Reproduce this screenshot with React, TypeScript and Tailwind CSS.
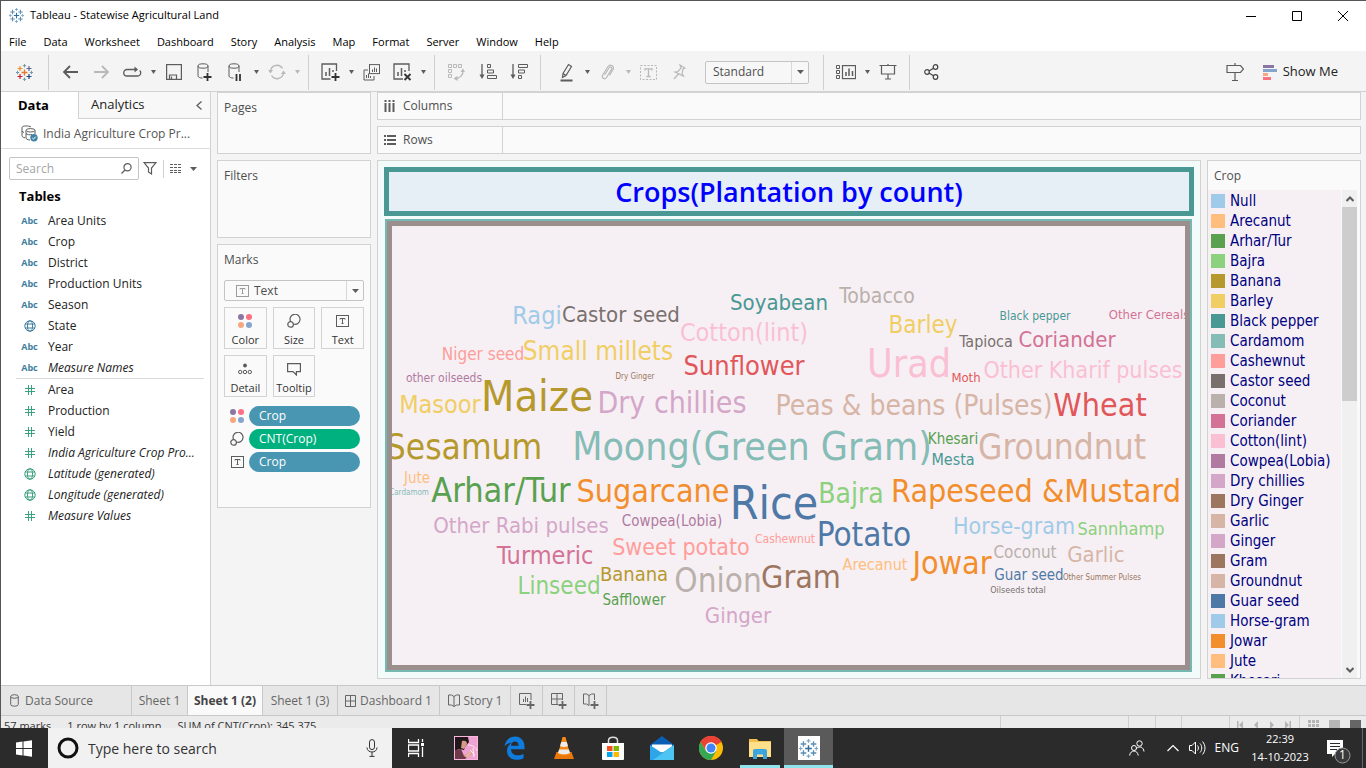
import type { ReactNode } from "react";

/* ---------- data ---------- */

type Word = { text: string; x: number; y: number; size: number; fill: string };

/* x is the middle of the word, y its baseline */
const words: Word[] = [
  { text: "Soyabean", x: 387, y: 84, size: 22, fill: "#499894" },
  { text: "Tobacco", x: 485, y: 77, size: 21, fill: "#bab0ac" },
  { text: "Ragi", x: 145, y: 98, size: 25, fill: "#a0cbe8" },
  { text: "Castor seed", x: 229, y: 96, size: 22, fill: "#79706e" },
  { text: "Cotton(lint)", x: 352, y: 115, size: 25, fill: "#fabfd2" },
  { text: "Barley", x: 531, y: 107, size: 24, fill: "#f1ce63" },
  { text: "Black pepper", x: 643, y: 94, size: 12, fill: "#499894" },
  { text: "Other Cereals", x: 757, y: 93, size: 13, fill: "#d37295" },
  { text: "Tapioca", x: 594, y: 121, size: 16, fill: "#79706e" },
  { text: "Coriander", x: 675, y: 121, size: 22, fill: "#d37295" },
  { text: "Niger seed", x: 91, y: 134, size: 17, fill: "#ff9d9a" },
  { text: "Small millets", x: 206, y: 134, size: 26, fill: "#f1ce63" },
  { text: "Sunflower", x: 352, y: 149, size: 27, fill: "#e15759" },
  { text: "Urad", x: 517, y: 151, size: 39, fill: "#fabfd2" },
  { text: "Moth", x: 574, y: 156, size: 13, fill: "#e15759" },
  { text: "Other Kharif pulses", x: 691, y: 152, size: 23, fill: "#fabfd2" },
  { text: "Dry Ginger", x: 243, y: 153, size: 8, fill: "#9d7660" },
  { text: "other oilseeds", x: 52, y: 156, size: 12, fill: "#b07aa1" },
  { text: "Masoor", x: 48, y: 187, size: 25, fill: "#f1ce63" },
  { text: "Maize", x: 145, y: 185, size: 43, fill: "#b6992d" },
  { text: "Dry chillies", x: 280, y: 187, size: 30, fill: "#d4a6c8" },
  { text: "Peas & beans (Pulses)", x: 522, y: 189, size: 28, fill: "#d7b5a6" },
  { text: "Wheat", x: 708, y: 190, size: 32, fill: "#e15759" },
  { text: "Sesamum", x: 72, y: 233, size: 35, fill: "#b6992d" },
  { text: "Moong(Green Gram)", x: 360, y: 234, size: 39, fill: "#86bcb6" },
  { text: "Khesari", x: 561, y: 218, size: 15, fill: "#59a14f" },
  { text: "Mesta", x: 561, y: 239, size: 16, fill: "#499894" },
  { text: "Groundnut", x: 670, y: 233, size: 35, fill: "#d7b5a6" },
  { text: "Jute", x: 25, y: 257, size: 15, fill: "#ffbe7d" },
  { text: "Cardamom", x: 17, y: 269, size: 8, fill: "#86bcb6" },
  { text: "Arhar/Tur", x: 109, y: 276, size: 34, fill: "#59a14f" },
  { text: "Sugarcane", x: 261, y: 276, size: 32, fill: "#f28e2b" },
  { text: "Rice", x: 382, y: 293, size: 46, fill: "#4e79a7" },
  { text: "Bajra", x: 459, y: 277, size: 28, fill: "#8cd17d" },
  { text: "Rapeseed &Mustard", x: 644, y: 276, size: 32, fill: "#f28e2b" },
  { text: "Other Rabi pulses", x: 129, y: 307, size: 22, fill: "#d4a6c8" },
  { text: "Cowpea(Lobia)", x: 280, y: 300, size: 15, fill: "#b07aa1" },
  { text: "Potato", x: 472, y: 320, size: 33, fill: "#4e79a7" },
  { text: "Horse-gram", x: 622, y: 308, size: 23, fill: "#a0cbe8" },
  { text: "Sannhamp", x: 729, y: 309, size: 18, fill: "#8cd17d" },
  { text: "Turmeric", x: 153, y: 338, size: 25, fill: "#d37295" },
  { text: "Sweet potato", x: 289, y: 329, size: 23, fill: "#ff9d9a" },
  { text: "Cashewnut", x: 393, y: 317, size: 12, fill: "#ff9d9a" },
  { text: "Arecanut", x: 483, y: 344, size: 16, fill: "#ffbe7d" },
  { text: "Jowar", x: 560, y: 348, size: 32, fill: "#f28e2b" },
  { text: "Coconut", x: 633, y: 332, size: 17, fill: "#bab0ac" },
  { text: "Garlic", x: 704, y: 336, size: 22, fill: "#d7b5a6" },
  { text: "Guar seed", x: 637, y: 354, size: 15, fill: "#4e79a7" },
  { text: "Other Summer Pulses", x: 710, y: 354, size: 8, fill: "#9d7660" },
  { text: "Oilseeds total", x: 626, y: 367, size: 9, fill: "#79706e" },
  { text: "Linseed", x: 167, y: 368, size: 24, fill: "#8cd17d" },
  { text: "Banana", x: 242, y: 355, size: 20, fill: "#b6992d" },
  { text: "Onion", x: 326, y: 366, size: 33, fill: "#bab0ac" },
  { text: "Gram", x: 409, y: 362, size: 32, fill: "#9d7660" },
  { text: "Safflower", x: 242, y: 379, size: 15, fill: "#59a14f" },
  { text: "Ginger", x: 346, y: 397, size: 22, fill: "#d4a6c8" },
];

const legend: [string, string][] = [
  ["Null", "#a0cbe8"],
  ["Arecanut", "#ffbe7d"],
  ["Arhar/Tur", "#59a14f"],
  ["Bajra", "#8cd17d"],
  ["Banana", "#b6992d"],
  ["Barley", "#f1ce63"],
  ["Black pepper", "#499894"],
  ["Cardamom", "#86bcb6"],
  ["Cashewnut", "#ff9d9a"],
  ["Castor seed", "#79706e"],
  ["Coconut", "#bab0ac"],
  ["Coriander", "#d37295"],
  ["Cotton(lint)", "#fabfd2"],
  ["Cowpea(Lobia)", "#b07aa1"],
  ["Dry chillies", "#d4a6c8"],
  ["Dry Ginger", "#9d7660"],
  ["Garlic", "#d7b5a6"],
  ["Ginger", "#d4a6c8"],
  ["Gram", "#9d7660"],
  ["Groundnut", "#d7b5a6"],
  ["Guar seed", "#4e79a7"],
  ["Horse-gram", "#a0cbe8"],
  ["Jowar", "#f28e2b"],
  ["Jute", "#ffbe7d"],
  ["Khesari", "#59a14f"],
];

type Field = { name: string; kind: "abc" | "globe" | "hash"; italic?: boolean };

const dimensions: Field[] = [
  { name: "Area Units", kind: "abc" },
  { name: "Crop", kind: "abc" },
  { name: "District", kind: "abc" },
  { name: "Production Units", kind: "abc" },
  { name: "Season", kind: "abc" },
  { name: "State", kind: "globe" },
  { name: "Year", kind: "abc" },
  { name: "Measure Names", kind: "abc", italic: true },
];

const measures: Field[] = [
  { name: "Area", kind: "hash" },
  { name: "Production", kind: "hash" },
  { name: "Yield", kind: "hash" },
  { name: "India Agriculture Crop Pro...", kind: "hash", italic: true },
  { name: "Latitude (generated)", kind: "globe", italic: true },
  { name: "Longitude (generated)", kind: "globe", italic: true },
  { name: "Measure Values", kind: "hash", italic: true },
];

const menus = ["File", "Data", "Worksheet", "Dashboard", "Story", "Analysis", "Map", "Format", "Server", "Window", "Help"];

/* ---------- icons ---------- */

function Svg({ w, h, children, stroke = "#5c5c5c" }: { w: number; h: number; children: ReactNode; stroke?: string }) {
  return (
    <svg width={w} height={h} viewBox={`0 0 ${w} ${h}`} fill="none" stroke={stroke} className="shrink-0" aria-hidden="true">
      {children}
    </svg>
  );
}

function TableauMark({ size, colors }: { size: number; colors: string[] }) {
  const [center, a, b, c, d, small] = colors;
  return (
    <svg width={size} height={size} viewBox="0 0 17 17" fill="none" className="shrink-0" aria-hidden="true">
      <path d="M8.5 5.5v6M5.5 8.5h6" stroke={center} strokeWidth="1.3" />
      <path d="M4 2v5M1.5 4.5h5" stroke={a} strokeWidth="1.2" />
      <path d="M13 2v5M10.500 4.500h5" stroke={b} strokeWidth="1.2" />
      <path d="M4 10v5M1.500 12.500h5" stroke={c} strokeWidth="1.2" />
      <path d="M13 10v5M10.500 12.500h5" stroke={d} strokeWidth="1.2" />
      <path d="M8.500 0v3.400M6.800 1.700h3.400M8.500 13.600v3.400M6.800 15.300h3.400M1.500 6.800v3.400M0 8.500h3.200M15.500 6.800v3.400M13.800 8.500h3.200" stroke={small} />
    </svg>
  );
}

const brandColors = ["#e8762c", "#eb912c", "#5c6692", "#c72035", "#1f457e", "#7199a6"];
const blueColors = ["#2f6f9f", "#5b8fb5", "#5b8fb5", "#5b8fb5", "#5b8fb5", "#7ba7c7"];

function Caret({ faded, big }: { faded?: boolean; big?: boolean }) {
  return (
    <svg width={big ? 7 : 5} height={4} viewBox="0 0 6 4" preserveAspectRatio="none" className="shrink-0" aria-hidden="true">
      <path d="M0 0h6L3 4z" fill={faded ? "#b9b9b9" : "#5c5c5c"} />
    </svg>
  );
}

function AbcIcon() {
  return <span className="text-[9px] font-bold text-[#3e7e9e]">Abc</span>;
}

function GlobeIcon({ color }: { color: string }) {
  return (
    <Svg w={12} h={12} stroke={color}>
      <circle cx="6" cy="6" r="5.2" />
      <ellipse cx="6" cy="6" rx="2.500" ry="5.200" />
      <path d="M1.200 4h9.600M1.200 8h9.600" />
    </Svg>
  );
}

function HashIcon() {
  return (
    <Svg w={10} h={10} stroke="#3aa17e">
      <path d="M3.500 0v10M6.500 0v10M0 3.500h10M0 6.500h10" />
    </Svg>
  );
}

function DotsIcon() {
  return (
    <svg width="14" height="14" viewBox="0 0 14 14" className="shrink-0" aria-hidden="true">
      <circle cx="3" cy="3" r="3" fill="#8b75a1" />
      <circle cx="11" cy="3" r="3" fill="#fc7182" />
      <circle cx="3" cy="11" r="3" fill="#f6a77f" />
      <circle cx="11" cy="11" r="3" fill="#85a5cd" />
    </svg>
  );
}

function SizeIcon() {
  return (
    <Svg w={14} h={14}>
      <path d="M3.600 7.500A5 5 0 1 1 6.500 10" strokeWidth="1.200" />
      <circle cx="3.600" cy="10.400" r="2.800" strokeWidth="1.200" />
    </Svg>
  );
}

function TextIcon({ faded }: { faded?: boolean }) {
  return (
    <Svg w={13} h={12} stroke={faded ? "#9b9b9b" : "#5c5c5c"}>
      <rect x="0.500" y="0.500" width="12" height="11" />
      <path d="M4 4.500V3.500h5v1M6.500 3.500v5M5.500 8.500h2" />
    </Svg>
  );
}

function DetailIcon() {
  return (
    <Svg w={14} h={12}>
      <circle cx="7" cy="2.500" r="1.900" fill="#5c5c5c" stroke="none" />
      <circle cx="2.200" cy="9" r="1.700" />
      <circle cx="7" cy="9" r="1.700" />
      <circle cx="11.800" cy="9" r="1.700" />
    </Svg>
  );
}

function TooltipIcon() {
  return (
    <Svg w={14} h={13}>
      <path d="M0.600 0.600h12.800v8h-4v3.400L6 8.600H0.600z" strokeWidth="1.200" />
    </Svg>
  );
}

const BackIcon = () => (
  <Svg w={17} h={14}><path d="M16 7H2M8 1L2 7l6 6" strokeWidth="1.800" /></Svg>
);
const ForwardIcon = () => (
  <Svg w={17} h={14} stroke="#b9b9b9"><path d="M1 7h14M9 1l6 6-6 6" strokeWidth="1.800" /></Svg>
);
const ReplayIcon = () => (
  <Svg w={19} h={12}>
    <path d="M14 3.500H4a3.200 3.200 0 0 0 0 6.500h10.500a3 3 0 0 0 3.200-3.200c0-1-.4-1.800-1-2.300" strokeWidth="1.300" />
    <path d="M11.500 0.500l3.500 3-3.500 3z" fill="#5c5c5c" stroke="none" />
  </Svg>
);
const SaveIcon = () => (
  <Svg w={16} h={16}>
    <rect x="0.600" y="0.600" width="14.800" height="14.800" strokeWidth="1.200" />
    <path d="M3.500 15v-4h7v4M5.500 15v-2.500" strokeWidth="1.200" />
  </Svg>
);
const NewDataIcon = () => (
  <Svg w={15} h={18}>
    <ellipse cx="6" cy="3" rx="5" ry="2.200" />
    <path d="M1 3v10c0 1.200 2 2 4.500 2.100M11 3v6" />
    <path d="M10.500 10v8M6.500 14h8" stroke="#333" strokeWidth="1.800" />
  </Svg>
);
const PauseDataIcon = () => (
  <Svg w={15} h={18}>
    <ellipse cx="6" cy="3" rx="5" ry="2.200" />
    <path d="M1 3v10c0 1.200 2 2 4.500 2.100M11 3v6" />
    <path d="M8.500 11v7M12 11v7" stroke="#333" strokeWidth="1.800" />
  </Svg>
);
const RefreshIcon = () => (
  <Svg w={18} h={16} stroke="#b9b9b9">
    <path d="M2.500 7A6.500 6.500 0 0 1 14.500 4.500M15.500 9a6.500 6.500 0 0 1-12 2.500" strokeWidth="1.400" />
    <path d="M0 6h5L2.500 9.500zM18 10h-5l2.500-3.500z" fill="#b9b9b9" stroke="none" />
  </Svg>
);
const NewSheetIcon = () => (
  <Svg w={19} h={18}>
    <path d="M15.500 8V1H1v15h8.500" strokeWidth="1.300" />
    <path d="M5 13V9M8.500 13V5M12 9V7" strokeWidth="1.500" />
    <path d="M14.500 10v8M10.500 14h8" stroke="#333" strokeWidth="1.800" />
  </Svg>
);
const DuplicateIcon = () => (
  <Svg w={18} h={17}>
    <rect x="6.500" y="0.600" width="10" height="9" />
    <path d="M9.500 8V5.500M11.500 8V3.500M13.500 8V4.500M5 6H1v10h10v-4M3.500 14v-3M5.500 14v-4.500M7.500 14v-2" />
  </Svg>
);
const ClearIcon = () => (
  <Svg w={20} h={18}>
    <path d="M16 8V1H1v15h9" strokeWidth="1.300" />
    <path d="M5 13V9M8.500 13V5M12 9V7" strokeWidth="1.500" />
    <path d="M11.500 11l6 6M17.500 11l-6 6" stroke="#333" strokeWidth="1.800" />
  </Svg>
);
const SwapIcon = () => (
  <Svg w={17} h={17} stroke="#b9b9b9">
    <path d="M0.500 0.500h3v3h-3zM5.500 0.500h3v3h-3zM10.500 0.500h3v3h-3zM0.500 5.500h3v3h-3zM0.500 10.500h3v3h-3z" />
    <path d="M15 6c.5 5-3 8.500-8 8.500" strokeWidth="1.300" />
    <path d="M12.500 8L15 4.500 17 8zM9.500 12L5.500 14.500 9.500 17z" fill="#b9b9b9" stroke="none" />
  </Svg>
);
const SortAscIcon = () => (
  <Svg w={18} h={16}>
    <path d="M3 0v13" strokeWidth="1.300" />
    <path d="M0.500 10.500h5L3 15z" fill="#5c5c5c" stroke="none" />
    <path d="M8.500 0.500h3v3h-3zM8.500 6h6v3h-6zM8.500 11.500h9v3h-9z" />
  </Svg>
);
const SortDescIcon = () => (
  <Svg w={18} h={16}>
    <path d="M3 0v13" strokeWidth="1.300" />
    <path d="M0.500 10.500h5L3 15z" fill="#5c5c5c" stroke="none" />
    <path d="M8.500 0.500h9v3h-9zM8.500 6h6v3h-6zM8.500 11.500h3v3h-3z" />
  </Svg>
);
const HighlightIcon = () => (
  <Svg w={13} h={19}>
    <path d="M3 10.500L8.500 1.500l3 2-5.500 9-3.500 2zM3 10.500l3 2" strokeWidth="1.200" />
    <path d="M0.500 17.500h12" strokeWidth="2" />
  </Svg>
);
const ClipIcon = () => (
  <Svg w={13} h={16} stroke="#b9b9b9">
    <path d="M3.500 11L8 4c1.200-2 3.600-.6 2.500 1.400L5.500 13.500C4 16 .2 14 1.600 11.300L7 2.500C9 -.5 13.600 2 12 5.500L8.500 11.500" strokeWidth="1.200" />
  </Svg>
);
const LabelIcon = () => (
  <Svg w={17} h={15} stroke="#b9b9b9">
    <rect x="0.500" y="0.500" width="16" height="14" strokeDasharray="2 1.500" />
    <path d="M5 5.500V3.800h7v1.700M8.500 4v7.500M6.500 11.500h4" strokeWidth="1.300" />
  </Svg>
);
const PinIcon = () => (
  <Svg w={13} h={16} stroke="#b9b9b9">
    <path d="M7 1l5 3-2 1-1 4.500 1.500 2.500L2 8l3-.5L8 4zM5.500 10L1 15" strokeWidth="1.200" />
  </Svg>
);
const FitIcon = () => (
  <Svg w={20} h={15}>
    <path d="M0.500 0.500h3v3h-3zM0.500 5.500h3v3h-3zM0.500 10.500h3v3h-3z" />
    <rect x="6.500" y="0.600" width="13" height="13" strokeWidth="1.200" />
    <path d="M10 11V7M13 11V3.500M16.500 11V6" strokeWidth="1.500" />
  </Svg>
);
const PresentIcon = () => (
  <Svg w={18} h={16}>
    <path d="M0.500 1.500h17M2.500 2v8h13V2M9 0v1.500M9 10v5M6 15h6" strokeWidth="1.200" />
  </Svg>
);
const ShareIcon = () => (
  <Svg w={15} h={16} stroke="#444">
    <circle cx="3" cy="8" r="2.300" strokeWidth="1.200" />
    <circle cx="11.500" cy="3" r="2.300" strokeWidth="1.200" />
    <circle cx="11.500" cy="13" r="2.300" strokeWidth="1.200" />
    <path d="M5 7l4.500-2.700M5 9l4.500 2.700" strokeWidth="1.200" />
  </Svg>
);
const SignIcon = () => (
  <Svg w={18} h={18}>
    <path d="M1 2.500h13.500L17.500 6l-3 3.500H1zM9 0v2.500M9 9.500v8M6 17.500h6" strokeWidth="1.200" />
  </Svg>
);
const TabPlus = () => <path d="M11.500 8v8M7.500 12h8" strokeWidth="1.800" />;
const SheetTabIcon = () => (
  <Svg w={16} h={16} stroke="#666">
    <path d="M12 7V0.500H0.500v11H7M4.500 9V6M6.500 9V3.500M8.500 9V5" />
    <TabPlus />
  </Svg>
);
const DashTabIcon = ({ plus }: { plus?: boolean }) => (
  <Svg w={plus ? 16 : 11} h={plus ? 16 : 12} stroke="#666">
    {plus ? (
      <>
        <path d="M11.500 7V0.500H0.500v11H7M6 0.500v11M0.500 6h11" />
        <TabPlus />
      </>
    ) : (
      <path d="M0.500 0.500h10v11h-10zM5.500 0.500v11M0.500 6h10" />
    )}
  </Svg>
);
const StoryTabIcon = ({ plus }: { plus?: boolean }) => (
  <Svg w={plus ? 16 : 12} h={plus ? 16 : 13} stroke="#666">
    {plus ? (
      <>
        <path d="M6 2.500L3.500 1h-3v10h3L6 12.500zM6 2.500L8.500 1h3v6" />
        <TabPlus />
      </>
    ) : (
      <path d="M6 2.500L3.500 1h-3v10h3L6 12.500l2.500-1.500h3V1h-3zM6 2.500v10" />
    )}
  </Svg>
);

/* ---------- pieces ---------- */

function ToolButton({ label, children }: { label: string; children: ReactNode }) {
  return (
    <button aria-label={label} className="flex h-8 w-[31px] shrink-0 items-center justify-center">
      {children}
    </button>
  );
}

function CaretButton({ label, faded }: { label: string; faded?: boolean }) {
  return (
    <button aria-label={label} className="flex h-8 w-[10px] shrink-0 items-center justify-center">
      <Caret faded={faded} />
    </button>
  );
}

const Divider = () => <div className="mx-[6px] h-[35px] w-px shrink-0 bg-[#cfcfcf]" />;

function FieldRow({ field, tone }: { field: Field; tone: string }) {
  return (
    <li>
      <button className="flex h-[21px] w-full items-center">
        <span className="flex w-[47px] items-center justify-center pl-[10px]">
          {field.kind === "abc" ? <AbcIcon /> : field.kind === "hash" ? <HashIcon /> : <GlobeIcon color={tone} />}
        </span>
        <span className={field.italic ? "whitespace-nowrap italic" : "whitespace-nowrap"}>{field.name}</span>
      </button>
    </li>
  );
}

function Card({ title, height, children }: { title: string; height: string; children?: ReactNode }) {
  return (
    <section className={`flex flex-col border border-[#d2d2d2] bg-[#fafafa] px-1.5 ${height}`}>
      <h2 className="pt-[7px] leading-4 text-[#4e4e4e]">{title}</h2>
      {children}
    </section>
  );
}

function MarkButton({ label, children }: { label: string; children: ReactNode }) {
  return (
    <button className="flex h-[42px] flex-col items-center border border-[#d2d2d2] bg-[#fafafa] pt-1.5 text-[#333]">
      <span className="flex h-[14px] items-center">{children}</span>
      <span className="mt-1 leading-4">{label}</span>
    </button>
  );
}

function Pill({ label, tone, children }: { label: string; tone: string; children: ReactNode }) {
  return (
    <li className="flex items-center">
      <span className="flex w-[25px] items-center justify-center pl-px">{children}</span>
      <button className={`h-5 flex-1 rounded-full pl-[10px] text-left font-medium text-white ${tone}`}>{label}</button>
    </li>
  );
}

function Shelf({ label, children }: { label: string; children: ReactNode }) {
  return (
    <section className="flex h-[28px] border border-[#d2d2d2] bg-[#fafafa]">
      <h2 className="flex w-[125px] items-center border-r border-[#d2d2d2] pl-1.5 text-[#4e4e4e]">
        <span className="w-[19px]">{children}</span>
        {label}
      </h2>
    </section>
  );
}

function SheetTab({ children, width, active, label }: { children: ReactNode; width: string; active?: boolean; label?: string }) {
  return (
    <button
      aria-label={label}
      className={`flex items-center justify-center gap-1 border-r border-[#c8c8c8] whitespace-nowrap ${width} ${
        active ? "bg-[#fafafa] font-bold text-[#444]" : "text-[#666]"
      }`}
    >
      {children}
    </button>
  );
}

function TaskButton({ label, children, state = "" }: { label: string; children: ReactNode; state?: string }) {
  return (
    <button aria-label={label} className={`flex w-[49px] shrink-0 items-center justify-center ${state}`}>
      {children}
    </button>
  );
}

/* ---------- regions ---------- */

function TitleBar() {
  return (
    <header className="bg-white text-[11px] text-black">
      <div className="flex h-[29px] items-center pl-2">
        <TableauMark size={15} colors={blueColors} />
        <h1 className="flex-1 pl-1.5">Tableau - Statewise Agricultural Land</h1>
        <button aria-label="Minimize" className="flex h-full w-[46px] items-center justify-center">
          <Svg w={10} h={10} stroke="#000"><path d="M0 5.500h10" /></Svg>
        </button>
        <button aria-label="Maximize" className="flex h-full w-[46px] items-center justify-center">
          <Svg w={10} h={10} stroke="#000"><path d="M0.500 0.500h9v9h-9z" /></Svg>
        </button>
        <button aria-label="Close" className="flex h-full w-[46px] items-center justify-center">
          <Svg w={10} h={10} stroke="#000"><path d="M0 0l10 10M10 0L0 10" /></Svg>
        </button>
      </div>
      <nav className="flex h-[21px] items-center gap-[17px] pt-[3px] pl-2">
        {menus.map((m) => (
          <button key={m}>{m}</button>
        ))}
      </nav>
    </header>
  );
}

function Toolbar() {
  return (
    <div className="flex h-[41px] shrink-0 items-center border-b border-[#d2d2d2] bg-[#f4f4f4] pt-[2px]">
      <button aria-label="Start page" className="flex w-[47px] items-center justify-center">
        <TableauMark size={17} colors={brandColors} />
      </button>
      <div className="mr-1.5 h-[35px] w-px bg-[#cfcfcf]" />
      <ToolButton label="Undo"><BackIcon /></ToolButton>
      <ToolButton label="Redo"><ForwardIcon /></ToolButton>
      <ToolButton label="Replay"><ReplayIcon /></ToolButton>
      <CaretButton label="Replay options" />
      <ToolButton label="Save"><SaveIcon /></ToolButton>
      <ToolButton label="New data source"><NewDataIcon /></ToolButton>
      <ToolButton label="Pause updates"><PauseDataIcon /></ToolButton>
      <CaretButton label="Pause options" />
      <ToolButton label="Run update"><RefreshIcon /></ToolButton>
      <CaretButton label="Run options" faded />
      <Divider />
      <ToolButton label="New worksheet"><NewSheetIcon /></ToolButton>
      <CaretButton label="New worksheet options" />
      <ToolButton label="Duplicate"><DuplicateIcon /></ToolButton>
      <ToolButton label="Clear sheet"><ClearIcon /></ToolButton>
      <CaretButton label="Clear options" />
      <Divider />
      <ToolButton label="Swap rows and columns"><SwapIcon /></ToolButton>
      <ToolButton label="Sort ascending"><SortAscIcon /></ToolButton>
      <ToolButton label="Sort descending"><SortDescIcon /></ToolButton>
      <Divider />
      <div className="w-1 shrink-0" />
      <ToolButton label="Highlight"><HighlightIcon /></ToolButton>
      <CaretButton label="Highlight options" />
      <ToolButton label="Group members"><ClipIcon /></ToolButton>
      <CaretButton label="Group options" faded />
      <ToolButton label="Show mark labels"><LabelIcon /></ToolButton>
      <ToolButton label="Fix axes"><PinIcon /></ToolButton>
      <div className="relative ml-[10px] flex h-[23px] w-[104px] shrink-0 items-center">
        <select
          aria-label="Fit"
          className="h-full w-full appearance-none rounded-[2px] border border-[#c4c4c4] bg-[#f7f7f7] pl-[7px] text-[#4e4e4e]"
        >
          <option>Standard</option>
        </select>
        <span className="pointer-events-none absolute inset-y-px right-px flex w-[17px] items-center justify-center border-l border-[#d8d8d8]">
          <Caret big />
        </span>
      </div>
      <div className="mr-1.5 ml-[14px] h-[35px] w-px bg-[#cfcfcf]" />
      <button aria-label="Show or hide cards" className="flex w-8 items-center justify-center"><FitIcon /></button>
      <CaretButton label="Card options" />
      <ToolButton label="Presentation mode"><PresentIcon /></ToolButton>
      <Divider />
      <ToolButton label="Share"><ShareIcon /></ToolButton>
      <div className="flex-1" />
      <ToolButton label="Guide"><SignIcon /></ToolButton>
      <button className="mr-7 ml-3 flex items-center gap-1.5 text-[13px] text-[#222]">
        <svg width="14" height="15" viewBox="0 0 14 15" aria-hidden="true">
          <path d="M0 0h11v3H0z" fill="#8b75a1" />
          <path d="M0 4h14v3H0z" fill="#85a5cd" />
          <path d="M0 8h5v3H0z" fill="#f6a77f" />
          <path d="M0 12h8v3H0z" fill="#fc7182" />
        </svg>
        Show Me
      </button>
    </div>
  );
}

function DataPane() {
  return (
    <aside className="flex w-[210px] shrink-0 flex-col border-r border-[#d2d2d2] bg-white text-[#222]">
      <div className="flex h-[27px] text-[13px]">
        <button className="w-[77px] pr-3 text-center font-bold text-black">Data</button>
        <button className="flex flex-1 items-center border-b border-l border-[#d2d2d2] bg-[#f8f8f8] pl-3">Analytics</button>
        <button aria-label="Collapse pane" className="flex w-[20px] items-center border-b border-[#d2d2d2] bg-[#f8f8f8] pl-[6px]">
          <Svg w={6} h={9}><path d="M5.500 0.500l-4.500 4 4.500 4" strokeWidth="1.300" /></Svg>
        </button>
      </div>
      <button className="flex h-[30px] shrink-0 items-center border-b border-[#dcdcdc] pl-5 text-[#555]">
        <svg width="17" height="17" viewBox="0 0 17 17" fill="none" stroke="#5c5c5c" className="mr-[5px]" aria-hidden="true">
          <path d="M10 2C8 .5 1 .5 1 2.500v8C1 12 2.500 12.500 4 12.800M1 6c.3.800 1 1.200 2 1.400" />
          <path d="M5 5.500v7.500c0 1 1.500 1.800 4 2M14 5.500V9M5 8.500c1 1.200 4 1.600 6 1" />
          <ellipse cx="9.500" cy="5.300" rx="4.500" ry="1.700" />
          <circle cx="13" cy="12.800" r="3.700" fill="#3e82a8" stroke="none" />
          <path d="M11.300 13l1.200 1.200 2.200-2.600" stroke="#fff" />
        </svg>
        India Agriculture Crop Pr...
      </button>
      <div className="mt-2 flex h-[23px] shrink-0 items-center pl-2">
        <label className="flex h-full w-[130px] items-center rounded-[2px] border border-[#c4c4c4] pr-1.5">
          <input aria-label="Search fields" placeholder="Search" className="min-w-0 flex-1 pl-1.5 placeholder-[#a5a5a5] outline-none" />
          <Svg w={11} h={11}>
            <circle cx="6.500" cy="4.300" r="3.600" strokeWidth="1.200" />
            <path d="M4 7L0.500 10.500" strokeWidth="1.200" />
          </Svg>
        </label>
        <button aria-label="Filter fields" className="ml-1">
          <Svg w={14} h={13}><path d="M1 0.600h12L8.500 6v6l-3-2V6z" strokeWidth="1.200" /></Svg>
        </button>
        <span className="mx-[6px] h-[18px] w-px bg-[#d2d2d2]" />
        <button aria-label="View as list">
          <Svg w={12} h={9}><path d="M0 0.500h12M0 3.500h12M0 6.500h12M0 8.500h12" strokeDasharray="3 1" /></Svg>
        </button>
        <button aria-label="Field options" className="ml-2"><Caret big /></button>
      </div>
      <h2 className="mt-[7px] pl-[18px] text-[13px] leading-[18px] font-bold text-black">Tables</h2>
      <ul className="mt-[5px]">
        {dimensions.map((f) => <FieldRow key={f.name} field={f} tone="#3e7e9e" />)}
      </ul>
      <div className="mr-1.5 ml-[15px] h-px shrink-0 bg-[#dcdcdc]" />
      <ul>
        {measures.map((f) => <FieldRow key={f.name} field={f} tone="#3aa17e" />)}
      </ul>
    </aside>
  );
}

function Cards() {
  return (
    <div className="flex w-[154px] shrink-0 flex-col gap-1.5">
      <Card title="Pages" height="h-[62px]" />
      <Card title="Filters" height="h-[78px]" />
      <Card title="Marks" height="h-[264px]">
        <div className="relative mt-3 flex h-[21px] w-[140px] shrink-0 items-center">
          <select
            aria-label="Mark type"
            className="h-full w-full appearance-none rounded-[2px] border border-[#c4c4c4] bg-[#fafafa] pl-[29px] text-[#4e4e4e]"
          >
            <option>Text</option>
          </select>
          <span className="pointer-events-none absolute left-3"><TextIcon faded /></span>
          <span className="pointer-events-none absolute inset-y-px right-px flex w-[17px] items-center justify-center border-l border-[#d8d8d8]">
            <Caret big />
          </span>
        </div>
        <div className="mt-1.5 grid grid-cols-3 gap-1.5 text-[11px]">
          <MarkButton label="Color"><DotsIcon /></MarkButton>
          <MarkButton label="Size"><SizeIcon /></MarkButton>
          <MarkButton label="Text"><TextIcon /></MarkButton>
          <MarkButton label="Detail"><DetailIcon /></MarkButton>
          <MarkButton label="Tooltip"><TooltipIcon /></MarkButton>
        </div>
        <ul className="mt-[9px] flex flex-col gap-[3px] pr-1">
          <Pill label="Crop" tone="bg-[#4996b2]"><DotsIcon /></Pill>
          <Pill label="CNT(Crop)" tone="bg-[#00b180]"><SizeIcon /></Pill>
          <Pill label="Crop" tone="bg-[#4996b2]"><TextIcon /></Pill>
        </ul>
      </Card>
    </div>
  );
}

function Viz() {
  return (
    <main className="flex min-w-0 flex-1 flex-col border border-[#d2d2d2] bg-[#f3fafa] p-1.5">
      <h2 className="flex h-[49px] shrink-0 items-center justify-center border-[5px] border-[#499894] bg-[#e6eef6] pt-0.5 text-[27px] font-semibold text-[#0000ff]">
        Crops(Plantation by count)
      </h2>
      <div className="mx-px mt-[3px] mr-0.5 flex min-h-0 flex-1 border-2 border-[#76b7b2]">
        <div className="min-w-0 flex-1 border-[5px] border-[#9a8f8c] bg-[#f6f0f4]">
          <svg
            viewBox="0 0 793 439"
            className="h-full w-full overflow-hidden font-['DejaVu_Sans_Condensed','DejaVu_Sans',sans-serif]"
            role="img"
            aria-label="Word cloud of crops sized by count"
          >
            {words.map((w) => (
              <text key={w.text} x={w.x} y={w.y} fontSize={w.size} fill={w.fill} textAnchor="middle">
                {w.text}
              </text>
            ))}
          </svg>
        </div>
      </div>
    </main>
  );
}

function Legend() {
  return (
    <aside className="flex w-[154px] shrink-0 flex-col border border-[#d2d2d2] bg-[#fafafa]">
      <h2 className="flex h-[29px] shrink-0 items-center pl-1.5 text-[#4e4e4e]">Crop</h2>
      <div className="flex min-h-0 flex-1">
        <ul className="min-w-0 flex-1 overflow-hidden bg-[#f6f0f4] pt-px pl-[3px] font-['DejaVu_Sans_Condensed','DejaVu_Sans',sans-serif] text-[15px] text-[#000080]">
          {legend.map(([name, color]) => (
            <li key={name} className="flex h-5 items-center gap-[5px] whitespace-nowrap">
              <svg width="14" height="14" className="shrink-0" aria-hidden="true"><rect width="14" height="14" fill={color} /></svg>
              {name}
            </li>
          ))}
        </ul>
        <div className="mr-[3px] ml-px flex w-[15px] shrink-0 flex-col bg-[#f0f0f0]">
          <button aria-label="Scroll up" className="flex h-[17px] shrink-0 items-center justify-center">
            <Svg w={8} h={6}><path d="M0.500 5L4 1.500 7.500 5" strokeWidth="2" /></Svg>
          </button>
          <div className="flex-1"><div className="h-[194px] bg-[#cdcdcd]" /></div>
          <button aria-label="Scroll down" className="flex h-[17px] shrink-0 items-center justify-center">
            <Svg w={8} h={6}><path d="M0.500 1L4 4.500 7.500 1" strokeWidth="2" /></Svg>
          </button>
        </div>
      </div>
    </aside>
  );
}

function SheetTabs() {
  return (
    <nav className="flex h-[31px] shrink-0 border-y border-[#c8c8c8] bg-[#e6e6e6]">
      <button className="flex w-[131px] items-center gap-1.5 border-r border-[#c8c8c8] pl-[9px] text-[#666]">
        <Svg w={9} h={13} stroke="#666">
          <ellipse cx="4.500" cy="2.500" rx="3.800" ry="1.800" />
          <path d="M0.700 2.500v8c0 2.200 7.600 2.200 7.600 0v-8" />
        </Svg>
        Data Source
      </button>
      <SheetTab width="w-[56px]">Sheet 1</SheetTab>
      <SheetTab width="w-[75px]" active>Sheet 1 (2)</SheetTab>
      <SheetTab width="w-[75px]">Sheet 1 (3)</SheetTab>
      <SheetTab width="w-[102px]"><DashTabIcon />Dashboard 1</SheetTab>
      <SheetTab width="w-[71px]"><StoryTabIcon />Story 1</SheetTab>
      <SheetTab width="w-8" label="New worksheet tab"><SheetTabIcon /></SheetTab>
      <SheetTab width="w-8" label="New dashboard tab"><DashTabIcon plus /></SheetTab>
      <SheetTab width="w-8" label="New story tab"><StoryTabIcon plus /></SheetTab>
    </nav>
  );
}

function StatusBar() {
  return (
    <div className="flex h-3 shrink-0 overflow-hidden bg-[#ebebeb] text-[11px] text-[#333]">
      <p className="flex flex-1 gap-4 pt-[2px] pl-[3px] leading-4 whitespace-nowrap">
        <span>57 marks</span>
        <span>1 row by 1 column</span>
        <span>SUM of CNT(Crop): 345,375</span>
      </p>
      <div className="w-[128px] border-l border-[#cfcfcf]" />
      <div className="w-[27px] border-l border-[#cfcfcf]" />
      <div className="w-[26px] border-l border-[#cfcfcf]" />
      <div className="w-12 border-l border-[#cfcfcf]" />
      <div className="w-[70px] border-l border-[#cfcfcf] pt-1 pl-[7px]">
        <svg width="54" height="10" viewBox="0 0 54 10" fill="#b5b5b5" aria-hidden="true">
          <path d="M0 1h1.500v8H0zM6 1v8L2 5zM21 1v8l-4-4zM33 1v8l4-4zM48 1v8l4-4zM52.500 1H54v8h-1.500z" />
        </svg>
      </div>
      <div className="w-[67px] border-l border-[#cfcfcf] pt-1 pl-2">
        <svg width="54" height="10" viewBox="0 0 54 10" fill="#b5b5b5" aria-hidden="true">
          <path d="M0 0h3v3H0zM4 0h3v3H4zM8 0h3v3H8zM0 4h3v3H0zM4 4h3v3H4zM8 4h3v3H8zM21 0h11v10H21z" />
          <path d="M42 0h11v10H42z" fill="#666" />
        </svg>
      </div>
    </div>
  );
}

function Taskbar() {
  return (
    <footer className="flex h-10 shrink-0 bg-[#2b2b2b] text-white">
      <button aria-label="Start" className="flex w-[48px] items-center justify-center">
        <svg width="16" height="17" viewBox="0 0 16 17" fill="#fff" aria-hidden="true">
          <path d="M0 2.500L6.500 1.600V8H0zM7.500 1.400L16 0.200V8H7.500zM0 9h6.500v6.400L0 14.500zM7.500 9H16v7.800l-8.500-1.200z" />
        </svg>
      </button>
      <label className="flex w-[344px] items-center bg-[#f1f1f1] pr-[14px] pl-[9px]">
        <svg width="22" height="24" viewBox="0 0 22 24" aria-hidden="true">
          <circle cx="11" cy="12" r="9" fill="none" stroke="#111" strokeWidth="3" />
        </svg>
        <input
          aria-label="Type here to search"
          placeholder="Type here to search"
          className="min-w-0 flex-1 pl-[9px] text-[14px] placeholder-[#333] outline-none"
        />
        <Svg w={12} h={18} stroke="#333">
          <rect x="3.500" y="0.600" width="5" height="10" rx="2.500" />
          <path d="M1 8.500c0 6 10 6 10 0M6 13v4M3.500 17.400h5" />
        </Svg>
      </label>
      <TaskButton label="Task view">
        <Svg w={17} h={18} stroke="#fff">
          <path d="M0.500 0v3.500h10V0M0.500 18v-3.500h10V18M0.500 6h10v6h-10zM14.500 0v3M14.500 8v10" strokeWidth="1.300" />
          <path d="M13 4h3v3h-3z" fill="#fff" stroke="none" />
        </Svg>
      </TaskButton>
      <TaskButton label="Pictures">
        <svg width="24" height="24" viewBox="0 0 24 24" aria-hidden="true">
          <rect width="24" height="24" fill="#f0a3d2" />
          <path d="M1 1h13l1 5-4 5-1 3-5-1-4 2z" fill="#22181c" />
          <path d="M8 5c3-1 5 0 5 3l-3 5-3-1z" fill="#d79a86" />
          <path d="M1 14l6-1 3 7 6-4 2 1-8 7H1z" fill="#6e3a4a" />
          <path d="M10 20l8-6 2 1-7 7z" fill="#e8b49c" />
          <path d="M16 14l5 5M19 12l1 9M14 9c4 0 8 2 9 6" stroke="#fff" fill="none" strokeWidth=".8" />
          <rect x=".5" y=".5" width="23" height="23" fill="none" stroke="#f9b7dd" />
        </svg>
      </TaskButton>
      <TaskButton label="Edge">
        <svg width="21" height="24" viewBox="0 0 21 24" aria-hidden="true">
          <path
            d="M.5 10.500C1.500 4 5.500.5 11 .5c6 0 9.500 4.500 9.500 10v2.800H7c.2 4.200 3.200 6 6.500 6 2.400 0 4.300-.6 6-1.600v4.500c-2 1-4.500 1.500-7 1.500C6.500 23.700 3 20 3 15c0-3.700 1.800-6.500 4.800-8.200C4.800 7 2.300 8.300.5 10.500zM7 9.800h7.600C14.500 7 13 5.600 10.900 5.600 8.900 5.600 7.400 7 7 9.800z"
            fill="#0f7bdd"
          />
        </svg>
      </TaskButton>
      <TaskButton label="VLC">
        <svg width="20" height="24" viewBox="0 0 20 24" aria-hidden="true">
          <path d="M2.500 16h15l2.500 7H0z" fill="#e9780b" />
          <path d="M8.500 1h3l4.500 17c-3 2-9 2-12 0z" fill="#f58a14" />
          <path d="M7.200 6h5.600l1.100 4c-2 1.200-5.800 1.200-7.800 0zM5 13.500h10l1 3.500c-3 1.800-9 1.800-12 0z" fill="#ececec" />
        </svg>
      </TaskButton>
      <TaskButton label="Store">
        <svg width="24" height="25" viewBox="0 0 24 25" aria-hidden="true">
          <path d="M7.500 8V4.500C7.500 0 16.500 0 16.500 4.500V8" fill="none" stroke="#ddd" strokeWidth="1.500" />
          <path d="M1 7h22v16a1 1 0 0 1-1 1H2a1 1 0 0 1-1-1z" fill="#fff" />
          <path d="M6 10h5.500v5H6z" fill="#f25022" />
          <path d="M12.500 10H18v5h-5.500z" fill="#7fba00" />
          <path d="M6 16h5.500v5H6z" fill="#00a4ef" />
          <path d="M12.500 16H18v5h-5.500z" fill="#ffb900" />
        </svg>
      </TaskButton>
      <TaskButton label="Mail">
        <svg width="24" height="24" viewBox="0 0 24 24" aria-hidden="true">
          <path d="M0 9L12 0l12 9v3H0z" fill="#0a5fb4" />
          <path d="M2 8.500h20v8H2z" fill="#fff" />
          <path d="M0 9l12 8 12-8v15H0z" fill="#2da5e8" />
          <path d="M24 9v15H3z" fill="#4cc5f5" />
        </svg>
      </TaskButton>
      <TaskButton label="Chrome">
        <svg width="24" height="24" viewBox="0 0 24 24" aria-hidden="true">
          <circle cx="12" cy="12" r="12" fill="#fbbc05" />
          <path d="M12 12L1.600 6A12 12 0 0 1 22.400 6z" fill="#ea4335" />
          <path d="M12 6h10.400A12 12 0 0 0 1.600 6l5.200 9z" fill="#ea4335" />
          <path d="M1.600 6A12 12 0 0 0 12 24l5.200-9H6.800z" fill="#34a853" />
          <circle cx="12" cy="12" r="5.800" fill="#fff" />
          <circle cx="12" cy="12" r="4.500" fill="#4285f4" />
        </svg>
      </TaskButton>
      <TaskButton label="File Explorer">
        <span className="flex h-full w-10 items-center justify-center border-b-[3px] border-[#8fe3ea] pt-[3px]">
          <svg width="22" height="21" viewBox="0 0 22 21" aria-hidden="true">
            <path d="M0 1h8l1.500 2H22v16H0z" fill="#f2c04c" />
            <path d="M0 4h22v15H0z" fill="#ffe08a" />
            <path d="M4 21v-8c0-1 .5-2 2-2h10c1.500 0 2 1 2 2v8h-4v-4.500H8V21z" fill="#3ba5e0" />
          </svg>
        </span>
      </TaskButton>
      <TaskButton label="Tableau" state="border-b-[3px] border-[#8fe3ea] bg-[#5a5a5a] pt-[3px]">
        <span className="flex h-6 w-[22px] items-center justify-center bg-white"><TableauMark size={19} colors={blueColors} /></span>
      </TaskButton>
      <div className="flex-1" />
      <button aria-label="People" className="mr-[22px] flex items-center">
        <Svg w={16} h={17} stroke="#fff">
          <circle cx="10.500" cy="3.500" r="2.700" /><circle cx="5" cy="8" r="2.500" />
          <path d="M7.500 8.500c3-3 7-1.500 7.500 3M0.700 15.500c.5-6 8-6 8.500 0" />
        </Svg>
      </button>
      <button aria-label="Hidden icons" className="mr-[10px] flex items-center">
        <Svg w={12} h={8} stroke="#fff"><path d="M0.500 7L6 1.500 11.500 7" strokeWidth="1.200" /></Svg>
      </button>
      <button aria-label="Volume" className="mr-[9px] flex items-center">
        <Svg w={17} h={14} stroke="#fff">
          <path d="M0.500 4.500h2.500L6.500 1v12L3 9.500H0.500z" />
          <path d="M8.500 4.500c1.200 1.500 1.200 3.500 0 5M11 2.500c2.300 2.500 2.300 6.500 0 9M13.500 0.500c3.300 3.700 3.300 9.300 0 13" />
        </Svg>
      </button>
      <button className="text-[12px]">ENG</button>
      <button className="w-[82px] text-center text-[11px] leading-[18px]">
        22:39
        <br />
        14-10-2023
      </button>
      <button aria-label="Notifications" className="relative w-[42px] border-r border-[#666]">
        <svg width="24" height="26" viewBox="0 0 24 26" className="absolute top-3 left-1.5" aria-hidden="true">
          <path d="M0 0h16v14H8l-3 3v-3H0z" fill="#fff" />
          <path d="M3 3.500h10M3 6.500h10M3 9.500h7" stroke="#2b2b2b" />
          <circle cx="15.500" cy="15.500" r="7.500" fill="#3a3a3a" stroke="#999" />
        </svg>
        <span className="absolute top-[19px] left-[18px] text-[12px] leading-4">1</span>
      </button>
      <div className="w-[3px]" />
    </footer>
  );
}

export default function App() {
  return (
    <div className="flex h-screen flex-col overflow-hidden bg-[#f4f4f4] font-['Open_Sans','Noto_Sans',sans-serif] text-[12px]">
      <div className="flex min-h-0 flex-1 flex-col border-t border-l border-[#555]">
        <TitleBar />
        <Toolbar />
        <div className="flex min-h-0 flex-1">
          <DataPane />
          <div className="flex min-w-0 flex-1 gap-1.5 pr-[5px] pb-1.5 pl-1.5">
            <Cards />
            <div className="flex min-w-0 flex-1 flex-col gap-1.5">
              <Shelf label="Columns">
                <Svg w={11} h={12}><path d="M1.500 0v2M5.500 0v2M9.500 0v2M1.500 3v9M5.500 3v9M9.500 3v9" strokeWidth="2" /></Svg>
              </Shelf>
              <Shelf label="Rows">
                <Svg w={12} h={10}><path d="M0 1h2M0 5h2M0 9h2M3 1h9M3 5h9M3 9h9" strokeWidth="2" /></Svg>
              </Shelf>
              <div className="flex min-h-0 flex-1 gap-1.5">
                <Viz />
                <Legend />
              </div>
            </div>
          </div>
        </div>
        <SheetTabs />
        <StatusBar />
      </div>
      <Taskbar />
    </div>
  );
}
